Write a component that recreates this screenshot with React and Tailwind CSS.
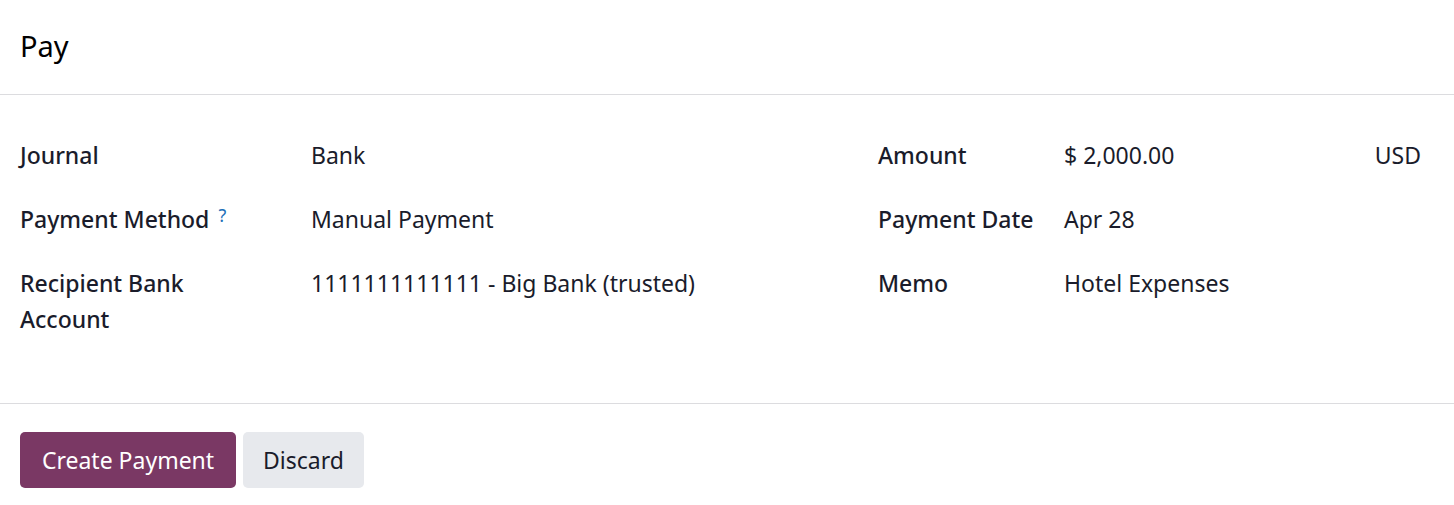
export default function App() {
  const font = { fontFamily: '"Noto Sans", "Open Sans", sans-serif' }

  return (
    <div className="w-[1454px] h-[505px] bg-white text-[#1a1c2b] flex flex-col font-['Noto_Sans',sans-serif]" style={font}>
      {/* header */}
      <div className="h-[95px] border-b border-[#dcdcdf] flex items-center px-5 shrink-0">
        <h4 className="text-[29px] text-black leading-none -mt-[3px]">Pay</h4>
      </div>

      {/* body */}
      <div className="pt-[42px] pb-[66px] pl-5 pr-[33px] border-b border-[#dcdcdf] text-[23px] leading-[36px]">
        <div className="grid grid-cols-[291px_567px_186px_1fr] gap-y-[28px]">
          <div className="font-medium">Journal</div>
          <div>Bank</div>
          <div className="font-medium">Amount</div>
          <div className="flex justify-between">
            <span>$ 2,000.00</span>
            <span>USD</span>
          </div>

          <div className="font-medium">
            Payment Method
            <sup className="text-[18px] font-normal text-[#1c6fb8] ml-[9px] relative -top-[6px]">?</sup>
          </div>
          <div>Manual Payment</div>
          <div className="font-medium">Payment Date</div>
          <div>Apr 28</div>

          <div className="font-medium w-[200px]">Recipient Bank Account</div>
          <div>1111111111111 - Big Bank (trusted)</div>
          <div className="font-medium">Memo</div>
          <div>Hotel Expenses</div>
        </div>
      </div>

      {/* footer */}
      <div className="px-5 pt-[28px] flex gap-[7px]">
        <button className="h-[56px] w-[216px] flex items-center justify-center rounded-[5px] bg-[#7a3864] text-white text-[23px]">
          Create Payment
        </button>
        <button className="h-[56px] w-[121px] flex items-center justify-center rounded-[5px] bg-[#e7e9ed] text-[#1a1c2b] text-[23px]">
          Discard
        </button>
      </div>
    </div>
  )
}
